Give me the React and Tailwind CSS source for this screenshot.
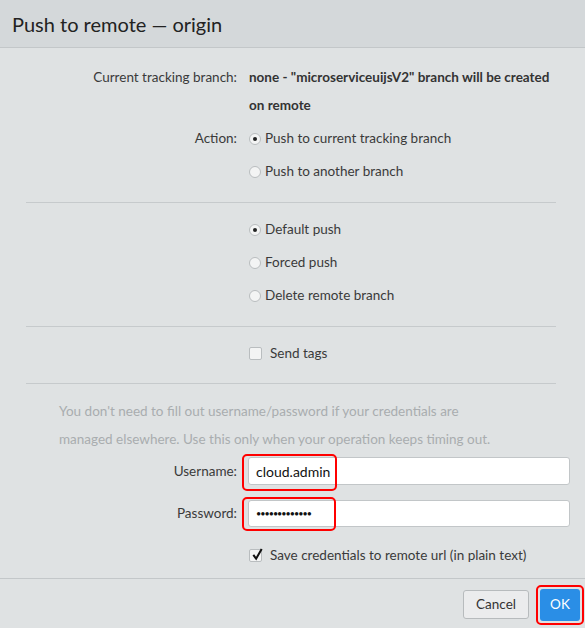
// Push to remote dialog (git client)
import { useState } from 'react';

const Radio = ({ checked, label }) => (
  <div className="flex h-[33px] items-center">
    <span className="flex h-[12px] w-[12px] items-center justify-center rounded-full border border-[#b9bdbf] bg-[#f3f4f4]">
      {checked && <span className="h-[4px] w-[4px] rounded-full bg-[#222]" />}
    </span>
    <span className="ml-[4px]">{label}</span>
  </div>
);

const Checkbox = ({ checked, label }) => (
  <div className="flex h-[33px] items-center">
    <span className="relative flex h-[13px] w-[13px] items-center justify-center rounded-[2px] border border-[#b9bdbf] bg-[#f3f4f4]">
      {checked && (
        <svg viewBox="0 0 14 14" className="absolute -top-[3px] left-[1px] h-[14px] w-[13px]">
          <path d="M2.5 8 L5.5 12 L11.5 1.5" fill="none" stroke="#111" strokeWidth="2.2" />
        </svg>
      )}
    </span>
    <span className="ml-[8px]">{label}</span>
  </div>
);

const Separator = () => <div className="ml-[26px] mr-[29px] mt-[14px] mb-[10px] h-px bg-[#c6cacc]" />;

const App = () => {
  const [user, setUser] = useState('cloud.admin');
  const [pass, setPass] = useState('cloudadmin123');

  return (
    <div className="flex h-[628px] w-[585px] flex-col bg-[#dfe2e3] text-[13.5px] text-[#3a3a3a] [font-family:Lato,'Open_Sans',sans-serif]">
      <div className="flex h-[48px] items-center border-b border-[#c3c7c9] bg-[#d4d8da] pl-[12px]">
        <h1 className="text-[20px] text-[#222]">Push to remote — origin</h1>
      </div>

      <div className="flex-1 pt-[15px]">
        <div className="flex">
          <div className="w-[249px] shrink-0 pr-[12px] text-right leading-[28px]">Current tracking branch:</div>
          <div className="w-[310px] font-bold leading-[28px] text-[#333]">
            none - "microserviceuijsV2" branch will be created on remote
          </div>
        </div>

        <div className="mt-[3px] flex">
          <div className="flex h-[33px] w-[249px] shrink-0 items-center justify-end pr-[12px]">Action:</div>
          <div>
            <Radio checked label="Push to current tracking branch" />
            <Radio label="Push to another branch" />
          </div>
        </div>

        <Separator />

        <div className="pl-[249px]">
          <Radio checked label="Default push" />
          <Radio label="Forced push" />
          <Radio label="Delete remote branch" />
        </div>

        <Separator />

        <div className="pl-[249px]">
          <Checkbox label="Send tags" />
        </div>

        <div className="ml-[26px] mr-[29px] mt-[13px] h-px bg-[#c6cacc]" />

        <p className="mt-[13px] ml-[59px] w-[432px] leading-[28px] text-[#a9adaf]">
          You don't need to fill out username/password if your credentials are managed elsewhere. Use this only when your operation keeps timing out.
        </p>

        <div className="mt-[4px] flex items-center">
          <label className="w-[249px] shrink-0 pr-[12px] text-right">Username:</label>
          <div className="relative ml-[-1px]">
            <input
              value={user}
              onChange={(e) => setUser(e.target.value)}
              className="h-[28px] w-[322px] rounded-[3px] border border-[#c2c6c8] bg-white px-[7px] text-[14px] text-[#111] outline-none"
            />
            <div className="pointer-events-none absolute -top-[3px] -left-[6px] h-[37px] w-[95px] rounded-[5px] border-2 border-[#f00]" />
          </div>
        </div>

        <div className="mt-[15px] flex items-center">
          <label className="w-[249px] shrink-0 pr-[12px] text-right">Password:</label>
          <div className="relative ml-[-1px]">
            <input
              type="password"
              value={pass}
              onChange={(e) => setPass(e.target.value)}
              className="h-[27px] w-[322px] rounded-[3px] border border-[#c2c6c8] bg-white px-[7px] text-[9px] tracking-[-1px] text-[#111] outline-none"
            />
            <div className="pointer-events-none absolute -top-[3px] -left-[6px] h-[34px] w-[94px] rounded-[5px] border-2 border-[#f00]" />
          </div>
        </div>

        <div className="mt-[12px] pl-[249px]">
          <Checkbox checked label="Save credentials to remote url (in plain text)" />
        </div>
      </div>

      <div className="flex h-[50px] items-center justify-end gap-[7px] border-t border-[#c3c7c9] pr-[1px] pt-[2px]">
        <button className="h-[29px] rounded-[3px] border border-[#b7bbbd] bg-[#ebeced] px-[12px] text-[#333]">
          Cancel
        </button>
        <div className="rounded-[5px] border-2 border-[#f00] p-[2px]">
          <button className="h-[32px] w-[40px] rounded-[3px] bg-[#2a8ee6] text-white">OK</button>
        </div>
      </div>
    </div>
  );
};

export default App;
